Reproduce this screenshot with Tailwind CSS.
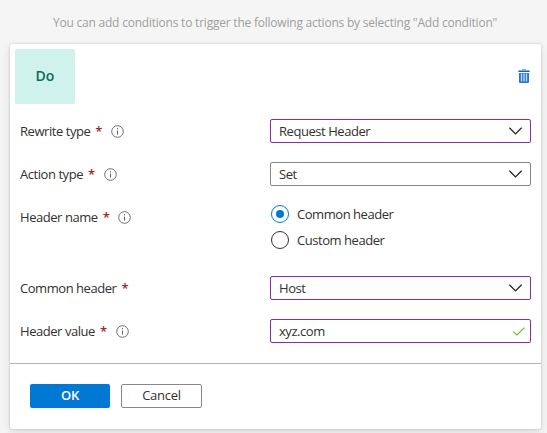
<!DOCTYPE html>
<html lang="en">
<head>
<meta charset="utf-8">
<title>Rewrite action</title>
<script src="https://cdn.jsdelivr.net/npm/@tailwindcss/browser@4"></script>
</head>
<body class="h-[433px] w-[547px] overflow-hidden bg-[#f5f5f5] font-['Open_Sans','Noto_Sans',sans-serif] text-[13px] leading-6 tracking-[-0.45px] text-[#323130]">
<svg class="hidden">
  <symbol id="info" viewBox="0 0 13 13"><circle cx="6.5" cy="6.5" r="5.8" fill="none" stroke="#605e5c" stroke-width="0.9"/><path d="M6.5 5.6v4M6.5 3.2v1.2" stroke="#605e5c" stroke-width="1"/></symbol>
  <symbol id="chevron" viewBox="0 0 13 8"><path d="M0.4 0.7 6.5 6.8 12.6 0.7" fill="none" stroke="#201f1e" stroke-width="1.2"/></symbol>
</svg>
<p class="h-[44px] pt-[11px] pl-[53px] text-[12px] tracking-[-0.22px] whitespace-nowrap text-[#a19f9d]"><span>You can add conditions to trigger the following actions by selecting "Add condition"</span></p>
<main class="ml-[10px] flex h-[385px] w-[531px] flex-col rounded-[2px] bg-white shadow-[0_0_2px_rgba(0,0,0,0.22),0_3px_8px_rgba(0,0,0,0.12)]">
  <header class="flex h-[75px] items-start justify-between pt-[5px] pr-[11px] pl-[5px]">
    <div class="flex h-[55px] w-[60px] items-center justify-center rounded-[2px] bg-[#cff2ed] pb-px text-[14px] font-semibold tracking-normal text-[#0b6a61]">Do</div>
    <svg class="mt-[20px] h-[14px] w-[12px]" viewBox="0 0 12 14"><path d="M4 0h4v1h3.5v2H.5V1H4z" fill="#79aef2"/><path d="M.5 2.5h11" stroke="#0b5cd5" stroke-width="1"/><path d="M1 4h10v9q0 1-1 1H2q-1 0-1-1z" fill="#2672de"/><path d="M3.5 4.5v8M6 4.5v8M8.5 4.5v8" stroke="#c3dbfb" stroke-width="1.3"/></svg>
  </header>
  <div class="grid w-[521px] grid-cols-[250px_261px] gap-y-[19px] pl-[10px]">
    <div class="flex items-center"><span>Rewrite type</span><b class="ml-[5px] font-semibold text-[#a4262c]">*</b><svg class="ml-[9px] size-[13px]"><use href="#info"/></svg></div>
    <div class="flex h-6 items-center justify-between rounded-[2px] border border-[#8a2da5] px-2"><span>Request Header</span><svg class="h-2 w-[13px]"><use href="#chevron"/></svg></div>
    <div class="flex items-center"><span>Action type</span><b class="ml-[5px] font-semibold text-[#a4262c]">*</b><svg class="ml-[9px] size-[13px]"><use href="#info"/></svg></div>
    <div class="flex h-6 items-center justify-between rounded-[2px] border border-[#8a8886] px-2"><span>Set</span><svg class="h-2 w-[13px]"><use href="#chevron"/></svg></div>
    <div class="flex h-6 items-center"><span>Header name</span><b class="ml-[5px] font-semibold text-[#a4262c]">*</b><svg class="ml-[9px] size-[13px]"><use href="#info"/></svg></div>
    <div class="flex h-[52px] flex-col">
      <div class="-mt-[4px] flex h-[26px] items-center"><span class="ml-px flex size-[18px] items-center justify-center rounded-full border border-[#0078d4]"><span class="size-2 rounded-full bg-[#0078d4]"></span></span><span class="ml-2">Common header</span></div>
      <div class="flex h-[26px] items-center"><span class="ml-px size-[18px] rounded-full border border-[#323130]"></span><span class="ml-2">Custom header</span></div>
    </div>
    <div class="flex items-center"><span>Common header</span><b class="ml-[5px] font-semibold text-[#a4262c]">*</b></div>
    <div class="flex h-6 items-center justify-between rounded-[2px] border border-[#8a2da5] px-2"><span>Host</span><svg class="h-2 w-[13px]"><use href="#chevron"/></svg></div>
    <div class="flex items-center"><span>Header value</span><b class="ml-[5px] font-semibold text-[#a4262c]">*</b><svg class="ml-[9px] size-[13px]"><use href="#info"/></svg></div>
    <div class="flex h-6 items-center justify-between rounded-[2px] border border-[#8a2da5] pr-[5px] pl-2"><span>xyz.com</span><svg class="h-[9px] w-3" viewBox="0 0 12 9"><path d="m.4 4.6 3.5 3.3L11.6.6" fill="none" stroke="#6bb82c" stroke-width="1.2"/></svg></div>
  </div>
  <footer class="mt-auto flex h-[66px] gap-[11px] border-t border-[#b5b3b1] pt-5 pl-5 tracking-[-0.25px]">
    <button class="h-6 w-20 rounded-[2px] bg-[#0078d4] pb-px leading-[23px] font-semibold text-white">OK</button>
    <button class="h-6 w-[81px] rounded-[2px] border border-[#8a8886] pb-px leading-[21px]">Cancel</button>
  </footer>
</main>
</body>
</html>
